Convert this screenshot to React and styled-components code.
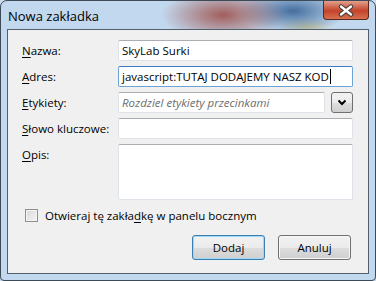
import React from "react";
import styled, { createGlobalStyle } from "styled-components";

const GlobalStyle = createGlobalStyle`
  html, body {
    margin: 0;
    padding: 0;
    background: #c9dcef;
  }
  * {
    box-sizing: border-box;
  }
`;

const FONT = `"Open Sans", "Noto Sans", "Liberation Sans", sans-serif`;

const Window = styled.div`
  width: 376px;
  height: 281px;
  display: flex;
  flex-direction: column;
  border: 1px solid #3d4a57;
  border-radius: 7px 7px 4px 4px;
  font-family: ${FONT};
  font-size: 11.5px;
  color: #000;
  background-color: #c2d8ee;
  background-image: radial-gradient(62px 26px at 222px 14px, rgba(160, 88, 84, 0.95), rgba(160, 88, 84, 0)), radial-gradient(55px 22px at 292px 10px, rgba(68, 110, 158, 1), rgba(68, 110, 158, 0)), radial-gradient(28px 10px at 305px 26px, rgba(205, 200, 150, 0.9), rgba(205, 200, 150, 0));
`;

const TitleBar = styled.div`
  height: 28px;
  display: flex;
  align-items: flex-start;
  padding-left: 7px;
`;

const Title = styled.div`
  margin-top: 6px;
  font-size: 13px;
  color: #000;
`;

const CloseButton = styled.div`
  margin-left: auto;
  margin-right: 6px;
  width: 46px;
  height: 19px;
  display: flex;
  align-items: center;
  justify-content: center;
  border: 1px solid #5a2a22;
  border-top: none;
  border-radius: 0 0 4px 4px;
  background-color: #c9503a;
  background-image: linear-gradient(180deg, #e2a08c, #c3432b 55%, #d8714e);
`;

const Client = styled.div`
  flex: 1;
  margin: 0 6px 6px 6px;
  border: 1px solid #52606e;
  background: #f0f0f0;
  padding: 10px 15px 0 14px;
  display: flex;
  flex-direction: column;
`;

const Form = styled.div`
  display: grid;
  grid-template-columns: 96px 1fr;
  row-gap: 5px;
`;

const Label = styled.div`
  height: 21px;
  line-height: 21px;
  white-space: nowrap;
`;

const Key = styled.span`
  text-decoration: underline;
  text-underline-offset: 2px;
`;

const Field = styled.div`
  height: ${({ $tall }) => ($tall ? 56 : 21)}px;
  border: 1px solid ${({ $focused }) => ($focused ? "#6ea3d8" : "#dde3e9")};
  border-top-color: ${({ $focused }) => ($focused ? "#3d7bc0" : "#abadb3")};
  border-radius: 2px;
  background: #fff;
  padding: 0 3px;
  line-height: 19px;
  white-space: nowrap;
  overflow: hidden;
  color: ${({ $hint }) => ($hint ? "#6d6d6d" : "#000")};
  font-style: ${({ $hint }) => ($hint ? "italic" : "normal")};
`;

const Caret = styled.span`
  display: inline-block;
  width: 1px;
  height: 15px;
  background: #000;
  vertical-align: -3px;
  margin-left: 1px;
`;

const TagRow = styled.div`
  display: flex;
  gap: 6px;
  & > ${Field} {
    flex: 1;
  }
`;

const DropButton = styled.div`
  width: 22px;
  height: 21px;
  border: 1px solid #707070;
  border-radius: 3px;
  display: flex;
  align-items: center;
  justify-content: center;
  background-color: #e4e4e4;
  background-image: linear-gradient(180deg, #f2f2f2, #ebebeb 50%, #dddddd 51%, #cfcfcf);
`;

const CheckRow = styled.div`
  display: flex;
  align-items: center;
  gap: 7px;
  margin-top: 9px;
  padding-left: 3px;
  height: 13px;
`;

const Box = styled.div`
  flex: none;
  width: 13px;
  height: 13px;
  border: 1px solid #8e8f8f;
  background-color: #e8e8e8;
  background-image: linear-gradient(135deg, #d6d6d6, #f6f6f6);
  box-shadow: inset 0 0 0 1px #f4f4f4;
`;

const Buttons = styled.div`
  display: flex;
  justify-content: flex-end;
  gap: 13px;
  margin-top: 13px;
  padding-right: 2px;
`;

const Button = styled.div`
  width: 73px;
  height: 25px;
  display: flex;
  align-items: center;
  justify-content: center;
  border: 1px solid ${({ $primary }) => ($primary ? "#3c7fb1" : "#707070")};
  border-radius: 3px;
  background-color: #e4e4e4;
  background-image: linear-gradient(180deg, #f2f2f2, #ebebeb 50%, #dddddd 51%, #cfcfcf);
  box-shadow: inset 0 0 0 1px ${({ $primary }) => ($primary ? "#9fd8f5" : "#f8f8f8")};
`;

function CloseIcon() {
  return (
    <svg width="16" height="13" viewBox="0 0 16 13">
      <path d="M3 2.5 L13 10.5 M13 2.5 L3 10.5" stroke="#3a3a3a" strokeWidth="4.4" strokeLinecap="round" />
      <path d="M3 2.5 L13 10.5 M13 2.5 L3 10.5" stroke="#fff" strokeWidth="2.4" strokeLinecap="round" />
    </svg>
  );
}

function Chevron() {
  return (
    <svg width="10" height="7" viewBox="0 0 10 7">
      <path d="M1.5 1.5 L5 5 L8.5 1.5" fill="none" stroke="#000" strokeWidth="2" />
    </svg>
  );
}

export default function App() {
  return (
    <>
      <GlobalStyle />
      <Window>
        <TitleBar>
          <Title>Nowa zakładka</Title>
          <CloseButton>
            <CloseIcon />
          </CloseButton>
        </TitleBar>
        <Client>
          <Form>
            <Label>
              <Key>N</Key>azwa:
            </Label>
            <Field>SkyLab Surki</Field>

            <Label>
              <Key>A</Key>dres:
            </Label>
            <Field $focused>
              javascript:TUTAJ DODAJEMY NASZ KOD
              <Caret />
            </Field>

            <Label>
              <Key>E</Key>tykiety:
            </Label>
            <TagRow>
              <Field $hint>Rozdziel etykiety przecinkami</Field>
              <DropButton>
                <Chevron />
              </DropButton>
            </TagRow>

            <Label>
              <Key>S</Key>łowo kluczowe:
            </Label>
            <Field />

            <Label>
              <Key>O</Key>pis:
            </Label>
            <Field $tall />
          </Form>

          <CheckRow>
            <Box />
            <span>
              Otwieraj tę zakła<Key>d</Key>kę w panelu bocznym
            </span>
          </CheckRow>

          <Buttons>
            <Button $primary>Dodaj</Button>
            <Button>Anuluj</Button>
          </Buttons>
        </Client>
      </Window>
    </>
  );
}
